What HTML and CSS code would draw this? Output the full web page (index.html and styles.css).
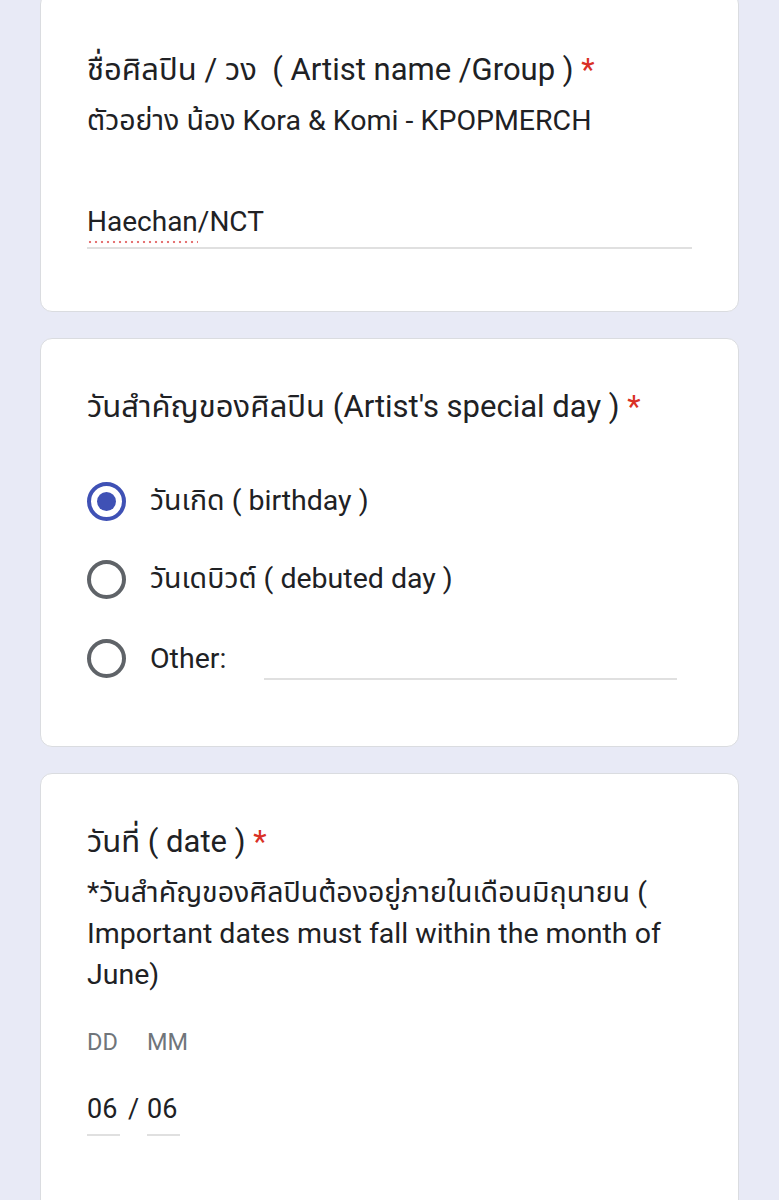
FILE: index.html
```html
<!DOCTYPE html>
<html lang="th">
<head>
  <meta charset="UTF-8" />
  <meta name="viewport" content="width=device-width, initial-scale=1.0"/>
  <title>แบบฟอร์ม</title>
  <link rel="stylesheet" href="styles.css">
</head>
<body>

  <div class="form">

    <div class="card card-first">
      <div class="q-title">ชื่อศิลปิน / วง&nbsp; ( Artist name /Group ) <span class="req">*</span></div>
      <div class="q-desc">ตัวอย่าง น้อง Kora &amp; Komi - KPOPMERCH</div>
      <div class="text-input"><span class="spell">Haechan</span>/NCT</div>
    </div>

    <div class="card">
      <div class="q-title">วันสำคัญของศิลปิน (Artist's special day ) <span class="req">*</span></div>
      <div class="options">
        <div class="option">
          <span class="radio checked"></span>
          <span class="option-label">วันเกิด ( birthday )</span>
        </div>
        <div class="option">
          <span class="radio"></span>
          <span class="option-label">วันเดบิวต์ ( debuted day )</span>
        </div>
        <div class="option">
          <span class="radio"></span>
          <span class="option-label">Other:</span>
          <span class="other-line"></span>
        </div>
      </div>
    </div>

    <div class="card card-last">
      <div class="q-title">วันที่ ( date ) <span class="req">*</span></div>
      <div class="q-desc">*วันสำคัญของศิลปินต้องอยู่ภายในเดือนมิถุนายน ( Important dates must fall within the month of June)</div>
      <div class="date">
        <div class="date-label">DD</div>
        <div></div>
        <div class="date-label">MM</div>
        <div class="date-value">06</div>
        <div class="date-sep">/</div>
        <div class="date-value">06</div>
      </div>
    </div>

  </div>

</body>
</html>
```

FILE: styles.css
```css
body {
  margin: 0;
  background: #e8eaf6;
  font-family: Roboto, "Noto Sans Thai", "Noto Sans", sans-serif;
  color: #202124;
  height: 1200px;
  overflow: hidden;
}

.form {
  display: flex;
  flex-direction: column;
  gap: 26px;
  margin-top: -8px;
  padding: 0 40px;
}

.card {
  background: #fff;
  border: 1px solid #dadce0;
  border-radius: 12px;
  padding: 46px 46px 62px;
}

.card-first {
  padding-top: 55px;
}

.card-last {
  padding-bottom: 140px;
}

.q-title {
  font-size: 31px;
  line-height: 44px;
  margin-bottom: 8px;
}

.req {
  color: #d93025;
}

.q-desc {
  font-size: 28.5px;
  line-height: 41px;
  padding-right: 8px;
}

.text-input {
  margin-top: 61px;
  font-size: 28px;
  line-height: 40px;
  padding-bottom: 5px;
  border-bottom: 2px solid #e0e0e0;
}

.spell {
  padding-bottom: 6px;
  background-image: radial-gradient(circle, #e57373 1px, transparent 1.6px);
  background-size: 6px 4px;
  background-repeat: repeat-x;
  background-position: 0 100%;
}

/* radio list */
.options {
  display: flex;
  flex-direction: column;
  gap: 38.5px;
  margin-top: 52px;
  padding-bottom: 6px;
}

.option {
  display: flex;
  align-items: center;
  height: 40px;
  font-size: 28.5px;
}

.radio {
  box-sizing: border-box;
  width: 39px;
  height: 39px;
  border: 4px solid #5f6368;
  border-radius: 50%;
  margin-right: 24px;
  display: flex;
  align-items: center;
  justify-content: center;
  flex-shrink: 0;
}

.radio.checked {
  border-color: #3f51b5;
}

.radio.checked::after {
  content: "";
  width: 19px;
  height: 19px;
  border-radius: 50%;
  background: #3f51b5;
}

.other-line {
  flex: 1;
  align-self: flex-end;
  height: 20px;
  border-bottom: 2px solid #e0e0e0;
  margin: 0 15px -2px 38px;
}

/* date */
.date {
  display: grid;
  grid-template-columns: 33px 27px 33px;
  margin-top: 32px;
}

.date-label {
  font-size: 23.5px;
  line-height: 30px;
  color: #70757a;
  margin-bottom: 32px;
}

.date-value {
  font-size: 27px;
  line-height: 40px;
  padding-bottom: 5px;
  border-bottom: 2px solid #e0e0e0;
}

.date-sep {
  font-size: 27px;
  line-height: 40px;
  text-align: center;
}
```
